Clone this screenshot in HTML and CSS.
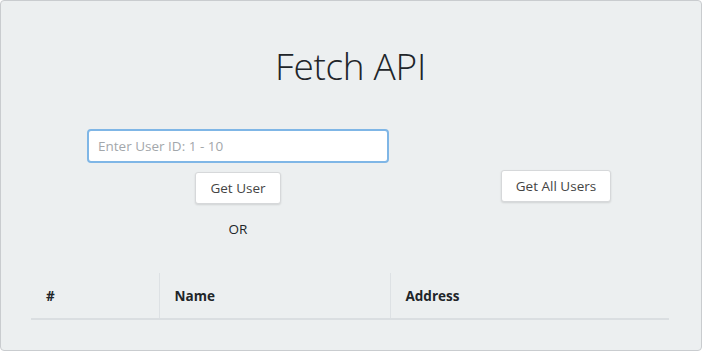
FILE: index.html
```html
<!DOCTYPE html>
<html lang="en">
<head>
  <meta charset="UTF-8">
  <meta name="viewport" content="width=device-width, initial-scale=1.0">
  <title>Fetch API</title>
  <link rel="stylesheet" href="styles.css">
</head>
<body>
  <div class="jumbotron">
    <h1 class="title">Fetch API</h1>

    <div class="controls">
      <div class="single-user">
        <input type="text" class="user-input" id="userId" placeholder="Enter User ID: 1 - 10">
        <button class="btn" id="getUser">Get User</button>
        <p class="or">OR</p>
      </div>
      <div class="all-users">
        <button class="btn" id="getAll">Get All Users</button>
      </div>
    </div>

    <table class="users-table">
      <thead>
        <tr>
          <th class="col-id">#</th>
          <th class="col-name">Name</th>
          <th class="col-address">Address</th>
        </tr>
      </thead>
      <tbody id="output"></tbody>
    </table>
  </div>
</body>
</html>
```

FILE: styles.css
```css
* {
  box-sizing: border-box;
}

body {
  margin: 0;
  font-family: 'Open Sans', 'Noto Sans', sans-serif;
  color: #212529;
  background: #fff;
}

.jumbotron {
  width: 702px;
  height: 351px;
  background-color: #eceff0;
  border: 1px solid #c9cccf;
  border-radius: 4px;
  padding: 41px 31px 0 30px;
}

.title {
  margin: 0;
  text-align: center;
  font-size: 37px;
  font-weight: 300;
  line-height: 48px;
  letter-spacing: -0.3px;
}

.controls {
  display: grid;
  grid-template-columns: 302px 226px;
  column-gap: 54px;
  margin: 39px 0 0 56px;
}

.single-user {
  display: flex;
  flex-direction: column;
  align-items: center;
}

.user-input {
  width: 302px;
  height: 34px;
  padding: 0 9px;
  font-family: inherit;
  font-size: 13.5px;
  color: #495057;
  background: #fff;
  border: 2px solid #7fb6e6;
  border-radius: 4px;
  outline: none;
}

.user-input::placeholder {
  color: #a3a7ab;
}

.btn {
  height: 32px;
  padding: 0 14px;
  font-family: inherit;
  font-size: 13.5px;
  color: #444;
  background: #fff;
  border: 1px solid #d6d8da;
  border-radius: 3px;
  box-shadow: 0 1px 2px rgba(0, 0, 0, 0.12);
  cursor: pointer;
}

#getUser {
  margin-top: 9px;
}

.or {
  margin: 15px 0 0;
  font-size: 13.5px;
  line-height: 20px;
}

.all-users {
  display: flex;
  justify-content: center;
  padding-top: 41px;
}

.users-table {
  width: 638px;
  margin-top: 34px;
  border-collapse: collapse;
  font-size: 13.5px;
}

.users-table th {
  height: 46px;
  padding: 0 15px;
  text-align: left;
  font-weight: 700;
  border-bottom: 2px solid #dadee1;
  border-left: 1px solid #dde1e4;
}

.users-table th:first-child {
  border-left: none;
}

.col-id {
  width: 128px;
}

.col-name {
  width: 231px;
}
```
